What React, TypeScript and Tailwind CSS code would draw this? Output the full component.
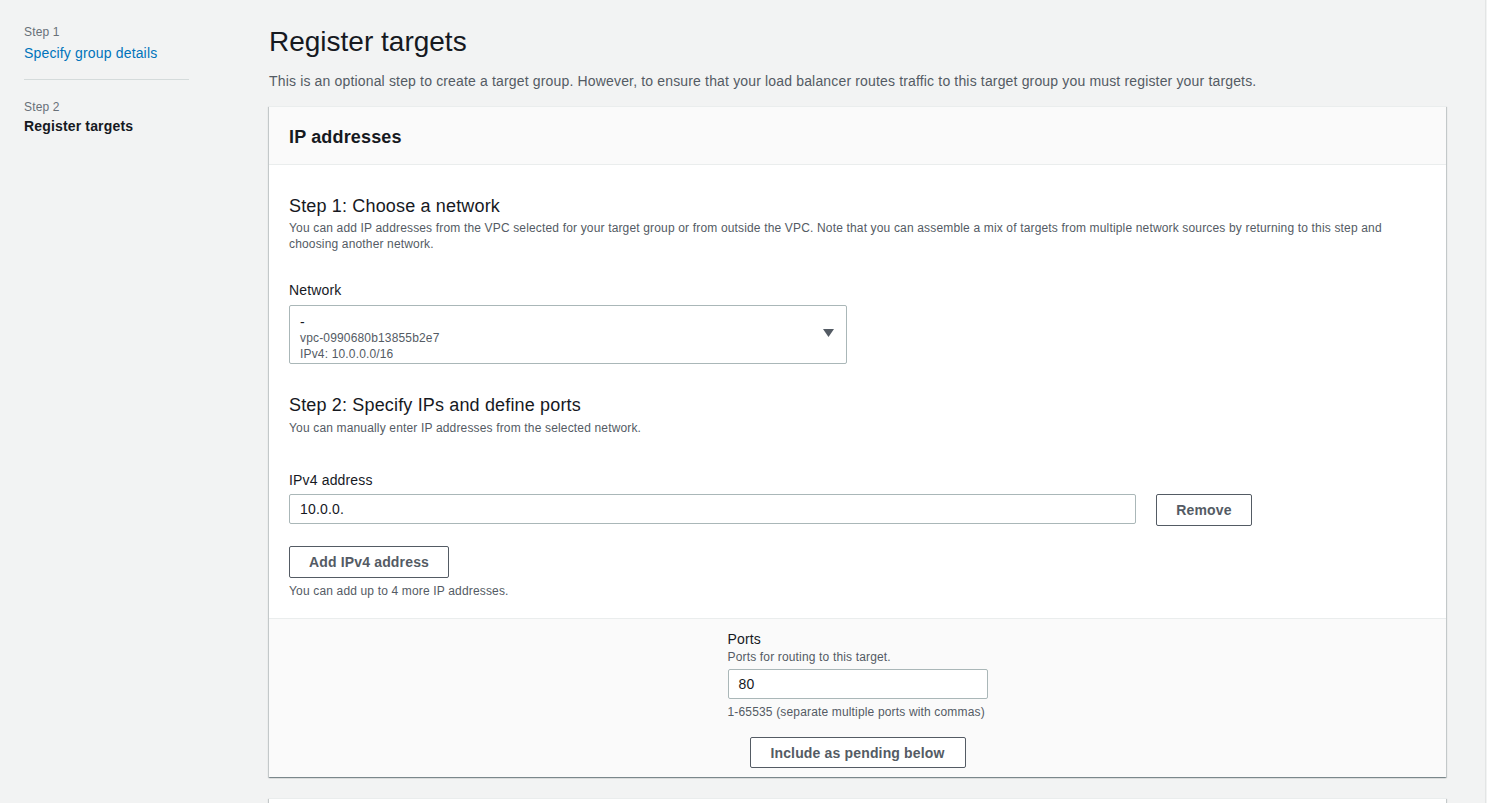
const font = { fontFamily: '"Liberation Sans", Arial, sans-serif' }

const sombra =
  'shadow-[0_1px_1px_0_rgba(0,28,36,0.3),1px_1px_1px_0_rgba(0,28,36,0.15),-1px_1px_1px_0_rgba(0,28,36,0.15)]'

function Boton({ children, className = '' }: { children: React.ReactNode; className?: string }) {
  return (
    <button
      className={`rounded-[2px] border border-[#545b64] bg-white text-sm font-bold text-[#545b64] ${className}`}
    >
      {children}
    </button>
  )
}

export default function App() {
  return (
    <div
      className="flex h-[803px] w-[1487px] overflow-hidden bg-[#f2f3f3] tracking-[0.01em] text-[#16191f]"
      style={font}
    >
      <nav className="w-[189px] shrink-0 pl-6 pt-[25px]">
        <p className="text-xs leading-[14px] text-[#687078]">Step 1</p>
        <a className="mt-[4px] block text-sm leading-[20px] text-[#0073bb]">Specify group details</a>
        <div className="mt-[16px] border-t border-[#d5dbdb]" />
        <p className="mt-[20px] text-xs leading-[14px] text-[#687078]">Step 2</p>
        <p className="mt-[2px] text-sm font-bold leading-[20px]">Register targets</p>
      </nav>

      <main className="ml-[80px] w-[1177px] shrink-0 pt-[24px]">
        <h1 className="text-[28px] leading-[36px] tracking-normal">Register targets</h1>
        <p className="mt-[12px] text-sm leading-[18px] text-[#545b64]">
          This is an optional step to create a target group. However, to ensure that your load balancer routes
          traffic to this target group you must register your targets.
        </p>

        <section className={`mt-[16px] border-t border-[#eaeded] bg-white ${sombra}`}>
          <header className="flex h-[58px] items-center border-b border-[#eaeded] bg-[#fafafa] px-5 pt-[2px]">
            <h2 className="text-lg font-bold leading-[22px]">IP addresses</h2>
          </header>

          <div className="px-5 pb-[19px] pt-[30px]">
            <h3 className="text-lg leading-[22px]">Step 1: Choose a network</h3>
            <p className="mt-[3px] w-[1110px] text-xs leading-[16px] text-[#545b64]">
              You can add IP addresses from the VPC selected for your target group or from outside the VPC. Note
              that you can assemble a mix of targets from multiple network sources by returning to this step and
              choosing another network.
            </p>

            <label className="mt-[28px] block text-sm leading-[20px]">Network</label>
            <div className="mt-[5px] flex h-[59px] w-[558px] items-center justify-between rounded-[2px] border border-[#aab7b8] pl-[10px] pr-[12px]">
              <div className="flex flex-col pt-[6px]">
                <span className="text-sm leading-[16px]">-</span>
                <span className="text-xs leading-[16px] text-[#545b64]">vpc-0990680b13855b2e7</span>
                <span className="text-xs leading-[16px] text-[#545b64]">IPv4: 10.0.0.0/16</span>
              </div>
              <svg width="11" height="8" viewBox="0 0 11 8" className="mb-[4px]">
                <path d="M0 0 H11 L5.5 8 Z" fill="#545b64" />
              </svg>
            </div>

            <h3 className="mt-[30px] text-lg leading-[22px]">Step 2: Specify IPs and define ports</h3>
            <p className="mt-[4px] text-xs leading-[16px] text-[#545b64]">
              You can manually enter IP addresses from the selected network.
            </p>

            <label className="mt-[34px] block text-sm leading-[20px]">IPv4 address</label>
            <div className="mt-[4px] flex items-start gap-5">
              <div className="flex h-[30px] w-[847px] items-center rounded-[2px] border border-[#aab7b8] px-[10px] text-sm">
                10.0.0.
              </div>
              <Boton className="h-[32px] w-[96px]">Remove</Boton>
            </div>

            <Boton className="mt-[20px] h-[32px] w-[160px]">Add IPv4 address</Boton>
            <p className="mt-[5px] text-xs leading-[16px] text-[#545b64]">You can add up to 4 more IP addresses.</p>
          </div>

          <div className="flex justify-center border-t border-[#eaeded] bg-[#fafafa] pb-[9px] pt-[10px]">
            <div className="w-[260px]">
              <label className="block text-sm leading-[20px]">Ports</label>
              <p className="text-xs leading-[16px] text-[#545b64]">Ports for routing to this target.</p>
              <div className="mt-[4px] flex h-[30px] items-center rounded-[2px] border border-[#aab7b8] bg-white px-[10px] text-sm">
                80
              </div>
              <p className="mt-[4px] whitespace-nowrap text-xs leading-[18px] text-[#545b64]">
                1-65535 (separate multiple ports with commas)
              </p>
              <div className="mt-[16px] flex justify-center">
                <Boton className="h-[31px] w-[216px]">Include as pending below</Boton>
              </div>
            </div>
          </div>
        </section>

        <section className={`mt-[21px] h-[40px] border-t border-[#eaeded] bg-white ${sombra}`} />
      </main>

      <div className="ml-[39px] h-full w-px shrink-0 bg-[#e3e5e5]" />
    </div>
  )
}
